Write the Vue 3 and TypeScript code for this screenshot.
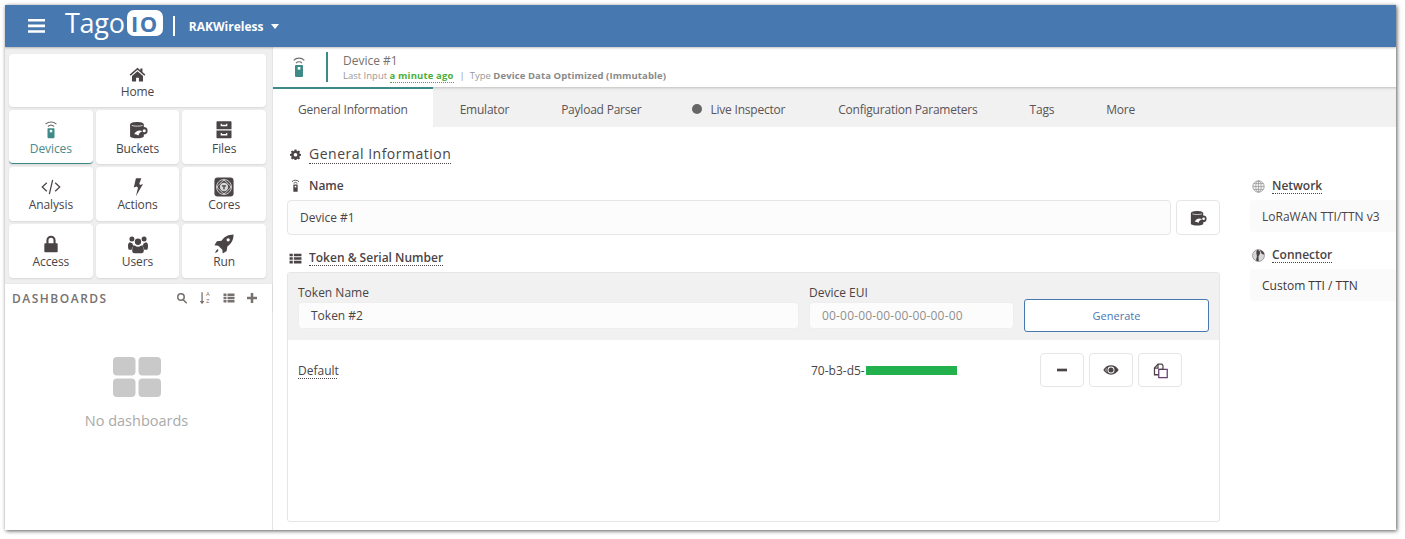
<script setup lang="ts">
interface Tile { label: string; icon: string; active?: boolean }
const rows: Tile[][] = [
  [{ label: 'Devices', icon: 'device', active: true }, { label: 'Buckets', icon: 'bucket' }, { label: 'Files', icon: 'files' }],
  [{ label: 'Analysis', icon: 'code' }, { label: 'Actions', icon: 'bolt' }, { label: 'Cores', icon: 'cores' }],
  [{ label: 'Access', icon: 'lock' }, { label: 'Users', icon: 'users' }, { label: 'Run', icon: 'rocket' }],
]
const paths: Record<string, string> = {
  files: 'M4 1.500h16a1 1 0 0 1 1 1V11H3V2.500a1 1 0 0 1 1-1zM8 4.500V7.500h8V4.500h-1.500v1.300h-5V4.500zM3 12.500h18V21a1 1 0 0 1-1 1H4a1 1 0 0 1-1-1zM8 15.500v3h8v-3h-1.500v1.300h-5v-1.300z',
  bolt: 'M9.500 1.500h6.500l-2.500 6.500 1 1.500 3.500-1L9.500 23l2.500-10-1.500-1.500-3.500 1z',
  lock: 'M6.500 11V7.500a5.500 5.500 0 0 1 11 0V11H19a1 1 0 0 1 1 1v9a1 1 0 0 1-1 1H5a1 1 0 0 1-1-1v-9a1 1 0 0 1 1-1zM9 11h6V7.500a3 3 0 0 0-6 0z',
  users: 'M12 5.500a3.800 3.800 0 1 1 0 7.600 3.800 3.800 0 0 1 0-7.600zM4.700 3a3 3 0 1 1 0 6 3 3 0 0 1 0-6zM19.300 3a3 3 0 1 1 0 6 3 3 0 0 1 0-6zM0 14c0-2.500 1.200-4 2.500-4 .9.800 1.700 1.100 2.700 1.100.4 1.500 1 2.600 2 3.400-1.700.6-2.600 2.200-2.700 4.500H2c-1.400 0-2-1-2-5zM24 14c0-2.500-1.200-4-2.500-4-.9.800-1.700 1.100-2.700 1.100-.4 1.500-1 2.600-2 3.400 1.700.6 2.600 2.200 2.700 4.500H22c1.400 0 2-1 2-5zM8.300 13.800c1 1 2.300 1.500 3.700 1.500s2.700-.5 3.700-1.500c2 0 3.300 2 3.300 5.700 0 2.500-1 3.500-2.800 3.500H7.800C6 23 5 22 5 19.500c0-3.700 1.300-5.700 3.300-5.700z',
  rocket: 'M23.500.5c-.2 6-2 10.500-7.500 14.500l-.8 5.500L10.500 23.500l-.5-4.700-4.800-4.800L.5 13.500l3-4.700L9 8C13 2.500 17.500.7 23.500.5zM17 5a2 2 0 1 0 0 4 2 2 0 0 0 0-4zM5 18.500c.8.8-.2 3-3.800 4.300C2.500 19.200 4.200 17.700 5 18.500z',
  home: 'M12 2.500 1 12l1.300 1.600L12 5.300l9.700 8.300L23 12l-4-3.500V3.500h-3v2.400zM12 7.500 4.200 14.200V22h5.800v-5.500h4V22h5.800v-7.800z',
  search: 'M10 2a8 8 0 1 1-.001 16.001A8 8 0 0 1 10 2zm0 3a5 5 0 1 0 .001 10.001A5 5 0 0 0 10 5zm5.500 9.300 7 7-2.200 2.200-7-7z',
  list: 'M1 3h6v5H1zM9 3h14v5H9zM1 9.500h6v5H1zM9 9.500h14v5H9zM1 16h6v5H1zM9 16h14v5H9z',
  plus: 'M9.500 2h5v7.500H22v5h-7.500V22h-5v-7.500H2v-5h7.500z',
  cog: 'M10 1h4l.6 3 2 .9 2.600-1.700 2.800 2.800-1.700 2.600.9 2 3 .6v3.600l-3 .6-.9 2 1.700 2.600-2.800 2.800-2.600-1.700-2 .9-.6 3h-4l-.6-3-2-.9-2.600 1.700L2 19.800l1.700-2.600-.9-2-3-.6V11l3-.6.9-2L2 5.800 4.800 3l2.600 1.700 2-.9zM12 8.500a4 4 0 1 0 .001 8.001A4 4 0 0 0 12 8.500z',
  bucketBody: 'M2.500 5.500C2.500 3.500 7 2.500 11 2.500s8 1 8 3v3a4.500 4.500 0 1 1 0 9v2c0 1.500-4 2.500-8 2.500s-8.500-1-8.500-2.500z',
  bucketWave: 'M7.500 17c2-4 6-5.500 10-3.500-2.500.5-4 2-5 5-1.500-1.200-3-1.500-5-1.500z',
}
</script>

<template>
  <div class="window">
    <header class="topbar">
      <svg class="burger" viewBox="0 0 17 14"><path d="M0 0h17v2.600H0zM0 5.600h17v2.600H0zM0 11.200h17v2.600H0z" fill="#fff" /></svg>
      <span class="brand">Tago</span>
      <span class="io"><span class="io-inner">IO</span></span>
      <span class="sep"></span>
      <span class="org">RAKWireless</span>
      <span class="caret"></span>
    </header>

    <div class="body">
      <aside class="side">
        <div class="tiles">
          <button class="tile home">
            <svg class="ico" viewBox="0 0 24 24"><path :d="paths.home" /></svg>
            <span>Home</span>
          </button>
          <div v-for="(row, i) in rows" :key="i" class="tile-row" :class="{ first: i === 0 }">
            <button v-for="t in row" :key="t.label" class="tile" :class="{ active: t.active }">
              <svg v-if="t.icon === 'device'" class="ico" viewBox="0 0 24 24">
                <path d="M5.500 5a9.500 9.500 0 0 1 13 0M8.300 7.800a5.500 5.500 0 0 1 7.400 0" fill="none" stroke="#6f6f6f" stroke-width="1.300" />
                <rect x="7.800" y="9.800" width="8.400" height="12" rx="1" fill="#3d8a88" />
                <rect x="10.500" y="11.800" width="3" height="3" fill="#fff" />
              </svg>
              <svg v-else-if="t.icon === 'bucket'" class="ico" viewBox="0 0 24 24">
                <path :d="paths.bucketBody" fill="#4a4446" />
                <path d="M4.500 6.500c2.500 1.200 10.500 1.200 13 0" fill="none" stroke="#fff" stroke-width=".9" />
                <path :d="paths.bucketWave" fill="#fff" />
                <circle cx="19.500" cy="13" r="1.800" fill="#fff" />
              </svg>
              <svg v-else-if="t.icon === 'code'" class="ico" viewBox="0 0 24 24">
                <path d="M7 7 1.500 12 7 17M17 7l5.500 5-5.500 5M14 3.500 10 20.500" fill="none" stroke="#4a4446" stroke-width="1.500" />
              </svg>
              <svg v-else-if="t.icon === 'cores'" class="ico" viewBox="0 0 24 24">
                <rect x="0.500" y="0.500" width="23" height="23" rx="4" fill="#4a4446" />
                <circle cx="12" cy="12" r="9" fill="none" stroke="#d8d8d8" stroke-width="1.100" />
                <rect x="5.800" y="5.800" width="12.400" height="12.400" rx="2" fill="none" stroke="#d8d8d8" stroke-width="1.100" transform="rotate(45 12 12)" />
                <circle cx="12" cy="12" r="5" fill="#d8d8d8" />
                <path d="M9.500 9.800h5v1.500h-1.700v3.700h-1.600v-3.700H9.500z" fill="#4a4446" />
              </svg>
              <svg v-else class="ico" viewBox="0 0 24 24"><path :d="paths[t.icon]" /></svg>
              <span>{{ t.label }}</span>
            </button>
          </div>
        </div>
        <div class="dash-head">
          <span class="dash-title">DASHBOARDS</span>
          <span class="dash-tools">
            <svg viewBox="0 0 24 24"><path :d="paths.search" /></svg>
            <span class="sort">
              <svg viewBox="0 0 10 24"><path d="M4 2h2.200v15H9l-3.900 5.500L1.200 17H4z" /></svg>
              <span class="az"><i>A</i><i>Z</i></span>
            </span>
            <svg viewBox="0 0 24 24"><path :d="paths.list" /></svg>
            <svg viewBox="0 0 24 24"><path :d="paths.plus" /></svg>
          </span>
        </div>
        <div class="empty">
          <svg class="empty-ico" viewBox="0 0 48 40">
            <rect x="0" y="0" width="22.500" height="18.500" rx="4" />
            <rect x="25.500" y="0" width="22.500" height="18.500" rx="4" />
            <rect x="0" y="21.500" width="22.500" height="18.500" rx="4" />
            <rect x="25.500" y="21.500" width="22.500" height="18.500" rx="4" />
          </svg>
          <div class="empty-text">No dashboards</div>
        </div>
      </aside>

      <main class="main">
        <div class="device-bar">
          <svg class="device-ico" viewBox="0 0 24 32">
            <path d="M4 6a11.500 11.500 0 0 1 16 0M7.500 10.200a6.500 6.500 0 0 1 9 0" fill="none" stroke="#6f6f6f" stroke-width="1.800" />
            <rect x="6" y="13" width="12" height="18" rx="1.500" fill="#3d8a88" />
            <rect x="10" y="16" width="4" height="4" fill="#fff" />
          </svg>
          <span class="device-rule"></span>
          <div class="device-meta">
            <div class="device-name">Device #1</div>
            <div class="device-sub">
              Last Input <b class="ago">a minute ago</b><span class="pipe">|</span>Type <b>Device Data Optimized (Immutable)</b>
            </div>
          </div>
        </div>

        <nav class="tabs">
          <a class="tab on">General Information</a>
          <a class="tab t-emu">Emulator</a>
          <a class="tab">Payload Parser</a>
          <a class="tab t-live"><i class="dot"></i>Live Inspector</a>
          <a class="tab">Configuration Parameters</a>
          <a class="tab">Tags</a>
          <a class="tab">More</a>
        </nav>

        <div class="content">
          <section class="left">
            <h2 class="h-main">
              <svg viewBox="0 0 24 24"><path :d="paths.cog" fill-rule="evenodd" /></svg>
              <span class="dotted">General Information</span>
            </h2>
            <div class="lbl name-lbl">
              <svg viewBox="0 0 24 24">
                <path d="M5.500 5a9 9 0 0 1 13 0M8.500 8a4.800 4.800 0 0 1 7 0" fill="none" stroke="#4a4446" stroke-width="1.600" />
                <rect x="8" y="10" width="8" height="13.500" rx="1" fill="#4a4446" />
                <rect x="10.500" y="12.500" width="3" height="3" fill="#fff" />
              </svg>
              <span>Name</span>
            </div>
            <div class="name-row">
              <div class="input name-input">Device #1</div>
              <button class="icon-btn bucket-btn">
                <svg viewBox="0 0 24 24">
                  <path :d="paths.bucketBody" fill="#4a4446" />
                  <path d="M4.500 6.500c2.500 1.200 10.500 1.200 13 0" fill="none" stroke="#fff" stroke-width=".9" />
                  <path :d="paths.bucketWave" fill="#fff" />
                  <circle cx="19.500" cy="13" r="1.800" fill="#fff" />
                </svg>
              </button>
            </div>
            <div class="lbl token-lbl">
              <svg viewBox="0 0 24 24"><path :d="paths.list" /></svg>
              <span class="dotted">Token &amp; Serial Number</span>
            </div>
            <div class="panel">
              <div class="panel-head">
                <div class="field f-token">
                  <label>Token Name</label>
                  <div class="input small">Token #2</div>
                </div>
                <div class="field f-eui">
                  <label>Device EUI</label>
                  <div class="input small ph">00-00-00-00-00-00-00-00</div>
                </div>
                <button class="generate">Generate</button>
              </div>
              <div class="token-row">
                <span class="t-default">Default</span>
                <span class="serial">70-b3-d5-<i class="mask"></i></span>
                <span class="actions">
                  <button class="icon-btn act">
                    <svg viewBox="0 0 24 24"><path d="M4.500 10h15v4h-15z" /></svg>
                  </button>
                  <button class="icon-btn act">
                    <svg viewBox="0 0 24 24">
                      <path d="M12 5c5 0 9 3 11.500 7C21 16 17 19 12 19S3 16 .5 12C3 8 7 5 12 5z" />
                      <circle cx="12" cy="12" r="5.200" fill="#fff" />
                      <circle cx="12" cy="12" r="3.800" />
                      <path d="M2.500 12c1-1.500 2.300-2.700 3.800-3.600C6 9.200 5.800 10.500 5.800 12s.2 2.800.5 3.600C4.800 14.700 3.500 13.500 2.500 12z" fill="#8a8688" />
                    </svg>
                  </button>
                  <button class="icon-btn act copy">
                    <svg viewBox="0 0 24 24">
                      <path d="M9 18H3.500V8.500L8.500 3H14l2 3" fill="none" stroke="#4a4446" stroke-width="1.800" />
                      <path d="M8.500 3v5.500H3.500" fill="none" stroke="#4a4446" stroke-width="1.800" />
                      <path d="M9.500 10.500h12V22h-12z" fill="none" stroke="#6a3f78" stroke-width="1.800" />
                      <path d="M15.500 6v4.500H10.500" fill="none" stroke="#4a4446" stroke-width="1.800" />
                    </svg>
                  </button>
                </span>
              </div>
            </div>
          </section>

          <aside class="right">
            <div class="lbl r-lbl">
              <svg viewBox="0 0 24 24">
                <circle cx="12" cy="12" r="10.500" fill="#f0f0f0" stroke="#8a8a8a" stroke-width="1.300" />
                <ellipse cx="12" cy="12" rx="5" ry="10.500" fill="none" stroke="#8a8a8a" stroke-width="1.100" />
                <path d="M1.500 12h21M3 6.500h18M3 17.500h18M12 1.500v21" fill="none" stroke="#8a8a8a" stroke-width="1.100" />
              </svg>
              <span class="dotted">Network</span>
            </div>
            <div class="r-box">LoRaWAN TTI/TTN v3</div>
            <div class="lbl r-lbl r-second">
              <svg viewBox="0 0 24 24">
                <circle cx="12" cy="12" r="11" fill="#d8d8d8" stroke="#666" stroke-width="1" />
                <path d="M10 1.500c3 .5 5 3 5 6s-3 4-3 7 1 5 0 8c-1 .3-3 0-4-1-1-3 1-5 1-8s-1-4-1-7 1-4 2-5z" fill="#4a4446" />
                <path d="M15 1.800c4 1.200 7 4 8 8-3 1-5-1-6-3s-2-3-2-5z" fill="#4a4446" />
              </svg>
              <span class="dotted">Connector</span>
            </div>
            <div class="r-box dark">Custom TTI / TTN</div>
          </aside>
        </div>
      </main>
    </div>
  </div>
</template>

<style>
html, body { margin: 0; background: #fff; overflow: hidden; }
</style>

<style scoped>
* { box-sizing: border-box; }
.window {
  margin: 5px 9px 9px 5px;
  width: 1391px;
  height: 525px;
  display: flex;
  flex-direction: column;
  overflow: hidden;
  background: #fff;
  font-family: "Open Sans", "Noto Sans", sans-serif;
  color: #4a4446;
  box-shadow: 1px 1px 4px rgba(0, 0, 0, .65);
}
.topbar {
  position: relative;
  z-index: 1;
  height: 42px;
  flex: none;
  background: #4878b0;
  display: flex;
  align-items: center;
  color: #fff;
  padding-left: 23px;
  box-shadow: 0 1px 2px rgba(0, 0, 0, .25);
}
.burger { width: 17px; height: 14px; margin-right: 20px; }
.brand { font-family: "Open Sans", sans-serif; font-size: 27px; line-height: 36px; margin-top: -6px; letter-spacing: -.25px; }
.io {
  width: 36px; height: 26px; background: #fff; border-radius: 7px; margin-left: 2px; margin-top: -6px;
  display: flex; align-items: center; justify-content: center;
}
.io-inner { color: #4878b0; font: 700 22px/22px "Open Sans", sans-serif; letter-spacing: 1.500px; }
.sep { width: 2px; height: 20px; background: #fff; margin: 0 14px 0 10px; }
.org { font-size: 12px; font-weight: 700; }
.caret { border: 4px solid transparent; border-top: 5px solid #fff; border-bottom: 0; margin-left: 8px; }
.body { flex: 1; display: flex; min-height: 0; }
.side {
  width: 268px; flex: none; background: #fff; display: flex; flex-direction: column;
  border-right: 1px solid #e4e4e4;
}
.tiles { background: #efefef; padding: 7px 6px 6px 4px; display: flex; flex-direction: column; gap: 3px; height: 237px; }
.tile-row { display: flex; gap: 3px; }
.tile-row.first .tile { padding-top: 11px; }
.tile-row.first .ico { margin-top: -1px; margin-bottom: 1px; }
.tile {
  flex: 1; height: 54px; background: #fff; border: 0; border-radius: 4px; padding: 10px 0 0;
  box-shadow: 0 1px 2px rgba(0, 0, 0, .1);
  font: 12px/15px "Open Sans", sans-serif; color: #4a4446; letter-spacing: -.1px;
  display: flex; flex-direction: column; align-items: center; justify-content: flex-start;
}
.tile.home { flex: none; height: 53px; width: 257px; }
.tile.home .ico { width: 17px; height: 17px; margin: 2px 0 1px; }
.tile.active { color: #4a8a8c; border-bottom: 1px solid #3d8a88; }
.ico { width: 20px; height: 20px; fill: #4a4446; display: block; flex: none; }
.dash-head {
  height: 27px; flex: none; display: flex; align-items: center; justify-content: space-between;
  padding: 2px 14px 0 7px; box-shadow: 0 1px 3px rgba(0, 0, 0, .12); background: #fff;
}
.dash-title { font-size: 12px; font-weight: 600; letter-spacing: 1.500px; color: #77716f; }
.dash-tools { display: flex; align-items: center; gap: 11px; margin-top: -2px; }
.dash-tools svg { width: 12px; height: 12px; fill: #77716f; display: block; }
.sort { display: flex; align-items: center; width: 13px; }
.sort svg { width: 6px; height: 14px; }
.az { display: flex; flex-direction: column; font: 6px/7px "Open Sans", sans-serif; color: #77716f; margin-left: 1px; }
.az i { font-style: normal; }
.empty { flex: 1; display: flex; flex-direction: column; align-items: center; padding: 46px 4px 0 0; background: #fff; }
.empty-ico { width: 48px; height: 40px; fill: #c9c9c9; display: block; }
.empty-text { font-size: 14.500px; line-height: 20px; color: #aaa; margin-top: 14px; }
.main { flex: 1; min-width: 0; display: flex; flex-direction: column; }
.device-bar { height: 40px; flex: none; display: flex; align-items: center; padding-left: 18px; background: #fff; }
.device-ico { width: 16px; height: 22px; }
.device-rule { width: 2px; height: 30px; background: #3d8a88; margin: 0 15px 0 19px; }
.device-meta { margin-top: 2px; }
.device-name { font-size: 12px; line-height: 16px; color: #77716f; }
.device-sub { font-size: 9.500px; line-height: 14px; color: #999; }
.device-sub b { font-weight: 700; color: #8a8a8a; letter-spacing: .1px; }
.device-sub b.ago { color: #4cae3a; border-bottom: 1px dotted #4cae3a; letter-spacing: .15px; }
.pipe { margin: 0 5px 0 6px; }
.tabs {
  height: 40px; flex: none; display: flex; background: #f1f1f1; box-shadow: inset 0 3px 3px -2px rgba(0, 0, 0, .22);
  font-size: 12px; color: #5a5456; letter-spacing: -.22px;
}
.tab { padding: 4px 26px 0; display: flex; align-items: center; }
.tab.on { background: #fff; border-top: 2px solid #3d8a88; padding: 2px 25px 0; }
.tab.t-emu { padding-left: 27px; }
.tab.t-live { padding-left: 25px; padding-right: 27px; }
.dot { width: 10px; height: 10px; background: #666; border-radius: 50%; margin-right: 8px; }
.content { flex: 1; display: flex; min-height: 0; background: #fff; }
.left { width: 933px; margin-left: 14px; flex: none; display: flex; flex-direction: column; }
.h-main { margin: 17px 0 0; height: 20px; display: flex; align-items: center; font-size: 14px; font-weight: 400; letter-spacing: .5px; color: #4a4446; }
.h-main svg { width: 11px; height: 11px; fill: #4a4446; margin: 0 8px 0 3px; }
.dotted { border-bottom: 1px dotted #4a4446; }
.lbl { display: flex; align-items: center; font-size: 12px; font-weight: 600; line-height: 15px; color: #4a4446; }
.lbl svg { width: 13px; height: 13px; fill: #4a4446; margin: 0 7px 0 2px; flex: none; }
.name-lbl { margin-top: 14px; }
.name-row { display: flex; gap: 5px; margin-top: 7px; }
.input {
  border: 1px solid #e6e6e6; border-radius: 4px; background: #fcfcfc;
  display: flex; align-items: center; font-size: 12px; color: #4a4446;
}
.name-input { flex: 1; height: 35px; padding-left: 12px; }
.icon-btn {
  display: flex; align-items: center; justify-content: center; background: #fff;
  border: 1px solid #e6e6e6; border-radius: 4px; padding: 0;
}
.bucket-btn { width: 44px; height: 35px; }
.bucket-btn svg { width: 18px; height: 18px; }
.token-lbl { margin-top: 15px; }
.panel { margin-top: 6px; height: 250px; border: 1px solid #e6e6e6; border-radius: 3px; }
.panel-head { height: 67px; background: #f1f1f1; display: flex; padding-left: 10px; }
.field { display: flex; flex-direction: column; }
.field label { font-size: 12px; font-weight: 500; line-height: 15px; margin-top: 12px; margin-bottom: 2px; }
.f-token { width: 501px; }
.f-eui { width: 205px; margin-left: 10px; }
.input.small { height: 27px; padding-left: 12px; border-color: #eee; }
.ph { color: #8f8f8f !important; letter-spacing: .17px; }
.generate {
  width: 185px; height: 33px; margin: 26px 0 0 10px; background: #fff; border: 1px solid #4878b0; border-radius: 3px;
  color: #4878b0; font: 11px "Open Sans", sans-serif;
}
.token-row { display: flex; align-items: center; height: 60px; font-size: 12px; }
.t-default { margin-left: 10px; width: 513px; text-decoration: underline dotted; text-underline-offset: 3px; }
.serial { display: flex; align-items: center; width: 229px; }
.mask { width: 91px; height: 9px; background: #22b14c; margin-left: 1px; }
.actions { display: flex; gap: 5px; }
.act { width: 44px; height: 34px; }
.act svg { width: 16px; height: 16px; fill: #4a4446; }
.copy svg { width: 17px; height: 17px; }
.right { width: 146px; margin-left: 30px; flex: none; display: flex; flex-direction: column; }
.r-lbl { margin-top: 51px; }
.r-second { margin-top: 15px; }
.r-box { height: 32px; margin-top: 6px; padding-left: 12px; background: #fafafa; display: flex; align-items: center; font-size: 12px; border-radius: 4px 0 0 4px; }
.dark { color: #3c3638; }
</style>
